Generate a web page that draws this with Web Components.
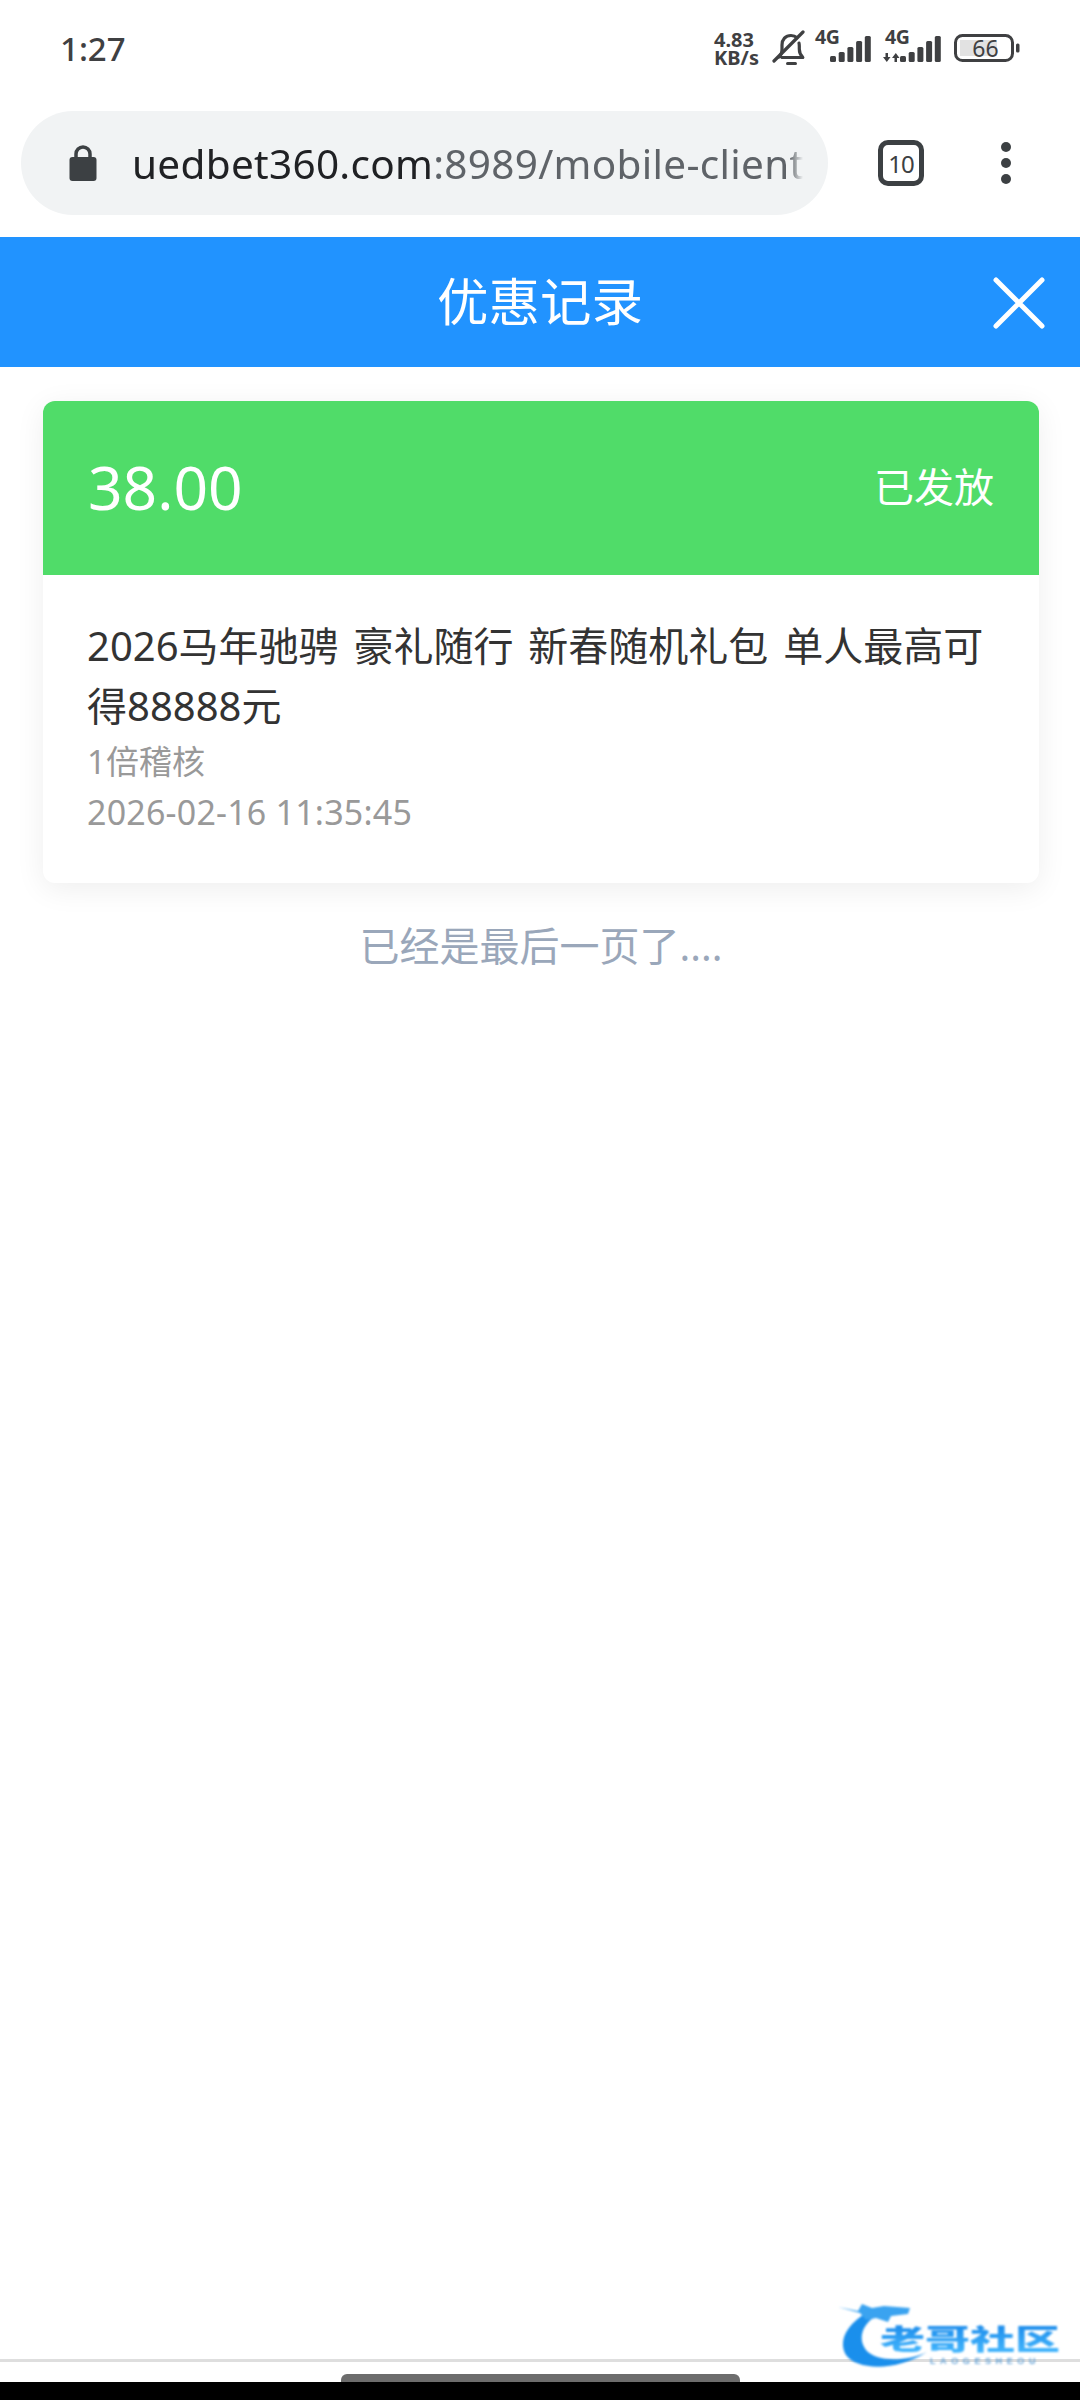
<!DOCTYPE html>
<html lang="zh">
<head>
<meta charset="utf-8">
<title>优惠记录</title>
<style>
  html, body { margin: 0; padding: 0; background: #fff; }
  body {
    width: 1080px; height: 2400px; overflow: hidden; position: relative;
    display: flex; flex-direction: column;
    font-family: "Noto Sans", "Noto Sans CJK SC", sans-serif;
  }
  promo-list { flex: 1; }
</style>
</head>
<body>
<status-bar time="1:27" speed="4.83" battery="66"></status-bar>
<browser-toolbar host-name="uedbet360.com" path=":8989/mobile-client" tabs="10"></browser-toolbar>
<page-header>优惠记录</page-header>
<promo-list>
  <promo-card amount="38.00" state="已发放" audit="1倍稽核" when="2026-02-16 11:35:45">2026马年驰骋 豪礼随行 新春随机礼包 单人最高可得88888元</promo-card>
  <end-note>已经是最后一页了....</end-note>
</promo-list>
<nav-strip></nav-strip>
<site-mark></site-mark>

<script>
const FONT = '"Noto Sans", "Noto Sans CJK SC", sans-serif';

function bars(x) {
  const tops = [20, 16, 11, 5, 0];
  return tops.map((t, i) => `<rect x="${x + i * 8.7}" y="${t}" width="6" height="${26 - t}" rx="1.5"/>`).join('');
}

customElements.define('status-bar', class extends HTMLElement {
  constructor() {
    super();
    this.attachShadow({mode: 'open'});
    const speed = this.getAttribute('speed');
    this.shadowRoot.innerHTML = `
      <style>
        :host {
          display: flex; align-items: center; box-sizing: border-box;
          height: 96px; padding: 0 60px 0 60px; color: #3f4042;
          font-family: ${FONT};
        }
        #time { font-size: 33px; font-weight: 500; margin-right: auto; margin-top: 1px; }
        #speed { font-size: 20px; line-height: 18px; font-weight: 700; width: 57px; margin-top: 2px; white-space: nowrap; }
        svg { display: block; fill: #3f4042; }
        .net { position: relative; height: 30px; }
        .net b { position: absolute; top: -5px; font-size: 19.5px; line-height: 18px; font-weight: 700; letter-spacing: -.5px; }
        #batt { position: relative; width: 66px; height: 28px; margin-left: 12px; }
        #batt span {
          position: absolute; left: 0; right: 6px; top: 0; bottom: 0;
          text-align: center; font-size: 23px; line-height: 28px; font-weight: 400; padding-left: 3px;
        }
      </style>
      <span id="time">${this.getAttribute('time')}</span>
      <div id="speed">${speed}<br>KB/s</div>
      <svg width="38" height="38" viewBox="0 0 36 38" style="margin-right:4px;margin-top:2px">
        <path d="M7 27c2.500-2 3-4 3-8v-4c0-5.500 3.500-9.500 9-9.500 2.500 0 4.500.8 6 2.200M27 13c.2 1 .3 1.800.3 3v3c0 4 1 6 3.500 8.500H10" fill="none" stroke="#3f4042" stroke-width="3.200" stroke-linecap="round" stroke-linejoin="round"/>
        <path d="M2 31L31 2" fill="none" stroke="#3f4042" stroke-width="3.200" stroke-linecap="round"/>
        <rect x="14" y="32" width="11" height="3" rx="1.500"/>
      </svg>
      <div class="net" style="width:70px">
        <b style="left:2px">4G</b>
        <svg width="70" height="30" viewBox="0 0 70 30" style="position:absolute;left:0;top:3px">${bars(17)}</svg>
      </div>
      <div class="net" style="width:59px">
        <b style="left:2px">4G</b>
        <svg width="60" height="30" viewBox="0 0 60 30" style="position:absolute;left:0;top:3px">
          <path d="M0 21h2.500v-4h2.500v4h2.500l-3.700 5zM9 22h2.500v4h2.500v-4h2.500l-3.700-5z" />
          ${bars(17)}
        </svg>
      </div>
      <div id="batt">
        <svg width="66" height="28" viewBox="0 0 66 28" style="position:absolute;inset:0">
          <rect x="1.500" y="1.500" width="57" height="25" rx="7" fill="none" stroke="#3f4042" stroke-width="3"/>
          <rect x="6" y="6" width="37" height="16" fill="#e2e2e2"/>
          <rect x="62" y="9.500" width="3.500" height="9" rx="1.500"/>
        </svg>
        <span>${this.getAttribute('battery')}</span>
      </div>
    `;
  }
});

customElements.define('browser-toolbar', class extends HTMLElement {
  constructor() {
    super();
    this.attachShadow({mode: 'open'});
    this.shadowRoot.innerHTML = `
      <style>
        :host {
          display: flex; align-items: center; box-sizing: border-box;
          height: 141px; padding: 0 0 7px 21px; font-family: ${FONT};
        }
        #omni {
          display: flex; align-items: center; box-sizing: border-box;
          width: 807px; height: 104px; border-radius: 52px; background: #f1f3f4;
          padding-left: 48px; gap: 35px;
        }
        #url {
          width: 671px; overflow: hidden; white-space: nowrap; font-size: 40.5px; color: #5f6368;
          letter-spacing: .3px;
          -webkit-mask-image: linear-gradient(to right, #000 98%, transparent 100%);
          mask-image: linear-gradient(to right, #000 98%, transparent 100%);
        }
        #url b { font-weight: 400; color: #202124; }
        #tabs {
          box-sizing: border-box; width: 46px; height: 46px; margin-left: 50px;
          border: 5px solid #3c4043; border-radius: 10px; color: #3c4043;
          display: flex; align-items: center; justify-content: center;
          font-size: 24px; letter-spacing: -1px;
        }
        #more { display: flex; flex-direction: column; gap: 6px; margin-left: 77px; }
        #more i { display: block; width: 10px; height: 10px; border-radius: 50%; background: #3c4043; }
        svg { flex: none; display: block; }
      </style>
      <div id="omni">
        <svg width="28" height="38" viewBox="0 0 28 38">
          <path d="M7 17V10a7 7 0 0 1 14 0v7" fill="none" stroke="#3c4043" stroke-width="3.500"/>
          <rect x="0.500" y="13" width="27" height="24" rx="3" fill="#3c4043"/>
        </svg>
        <div id="url"><b>${this.getAttribute('host-name')}</b>${this.getAttribute('path')}</div>
      </div>
      <div id="tabs">${this.getAttribute('tabs')}</div>
      <div id="more"><i></i><i></i><i></i></div>
    `;
  }
});

customElements.define('page-header', class extends HTMLElement {
  constructor() {
    super();
    this.attachShadow({mode: 'open'});
    this.shadowRoot.innerHTML = `
      <style>
        :host {
          display: flex; align-items: center; justify-content: center; position: relative;
          box-sizing: border-box; height: 130px; padding-bottom: 8px; background: #2193ff; color: #fff;
          font-size: 51.500px; font-family: ${FONT};
        }
        svg { position: absolute; left: 993px; top: 40px; }
      </style>
      <slot></slot>
      <svg width="52" height="52" viewBox="0 0 52 52">
        <path d="M3 3L49 49M49 3L3 49" stroke="#fff" stroke-width="5" stroke-linecap="round"/>
      </svg>
    `;
  }
});

customElements.define('promo-list', class extends HTMLElement {
  constructor() {
    super();
    this.attachShadow({mode: 'open'});
    this.shadowRoot.innerHTML = `
      <style>
        :host { display: block; box-sizing: border-box; padding: 34px 41px 0 43px; }
      </style>
      <slot></slot>
    `;
  }
});

customElements.define('promo-card', class extends HTMLElement {
  constructor() {
    super();
    this.attachShadow({mode: 'open'});
    this.shadowRoot.innerHTML = `
      <style>
        :host {
          display: block; border-radius: 12px; overflow: hidden; background: #fff;
          box-shadow: 0 6px 30px rgba(0,0,0,.07); font-family: ${FONT};
        }
        #top {
          display: flex; align-items: center; justify-content: space-between;
          height: 174px; box-sizing: border-box; padding: 0 45px;
          background: #50dc69; color: #fff;
        }
        #amount { font-size: 60.500px; font-weight: 400; padding-bottom: 4px; }
        #state { font-size: 40px; font-weight: 400; padding-bottom: 7px; }
        #body { box-sizing: border-box; height: 308px; padding: 41px 45px 0 44px; }
        #title { font-size: 40px; line-height: 60px; color: #333; word-spacing: 4.500px; }
        .sub { font-size: 34px; line-height: 50px; color: #999; }
        #audit { margin-top: 1px; font-size: 33px; }
        #when { letter-spacing: .2px; }
      </style>
      <div id="top">
        <span id="amount">${this.getAttribute('amount')}</span>
        <span id="state">${this.getAttribute('state')}</span>
      </div>
      <div id="body">
        <div id="title"><slot></slot></div>
        <div class="sub" id="audit">${this.getAttribute('audit')}</div>
        <div class="sub" id="when">${this.getAttribute('when')}</div>
      </div>
    `;
  }
});

customElements.define('end-note', class extends HTMLElement {
  constructor() {
    super();
    this.attachShadow({mode: 'open'});
    this.shadowRoot.innerHTML = `
      <style>
        :host {
          display: block; margin-top: 35px; text-align: center; line-height: 56px;
          font-size: 40px; color: #9aa7ba; font-family: ${FONT};
        }
      </style>
      <slot></slot>
    `;
  }
});

customElements.define('nav-strip', class extends HTMLElement {
  constructor() {
    super();
    this.attachShadow({mode: 'open'});
    this.shadowRoot.innerHTML = `
      <style>
        :host { display: block; flex: none; }
        #line { height: 3px; background: #dedede; }
        #gap { height: 20px; background: #fff; display: flex; justify-content: center; align-items: flex-end; }
        #pill { width: 399px; height: 8px; background: #6d6d6d; border-radius: 6px 6px 0 0; }
        #black { height: 18px; background: #000; }
      </style>
      <div id="line"></div>
      <div id="gap"><div id="pill"></div></div>
      <div id="black"></div>
    `;
  }
});

customElements.define('site-mark', class extends HTMLElement {
  constructor() {
    super();
    this.attachShadow({mode: 'open'});
    this.shadowRoot.innerHTML = `
      <style>
        :host {
          position: absolute; left: 836px; top: 2300px; width: 226px; height: 74px;
          filter: blur(.8px);
        }
        svg { position: absolute; left: 0; top: 0; }
        #cn {
          position: absolute; left: 44px; top: 10px; white-space: nowrap;
          font-family: "Noto Sans CJK SC", sans-serif; font-size: 45px; line-height: 56px;
          font-weight: 900; transform: scaleY(.64); transform-origin: 50% 50%;
          background: linear-gradient(#1685e8, #47bbff); -webkit-background-clip: text; background-clip: text;
          color: transparent;
        }
        #en {
          position: absolute; left: 94px; top: 56px; white-space: nowrap;
          font: 700 9px "Liberation Sans", sans-serif; letter-spacing: 4.600px; color: #6aa6d8;
        }
      </style>
      <svg width="226" height="74" viewBox="0 0 226 74">
        <path d="M30 13C10 25 2 42 10 55c10 15 50 17 81-3-21 10-51 10-61-2-8-10-5-25 10-34z" fill="#1a8fec"/>
        <path d="M2 7L22 11 26 4 36 8 48 6 74 8 72 14 55 16 52 22 40 18 30 20 24 13z" fill="#3aa3f0"/>
      </svg>
      <span id="cn">老哥社区</span>
      <span id="en">LAOGESHEOU</span>
    `;
  }
});
</script>
</body>
</html>
